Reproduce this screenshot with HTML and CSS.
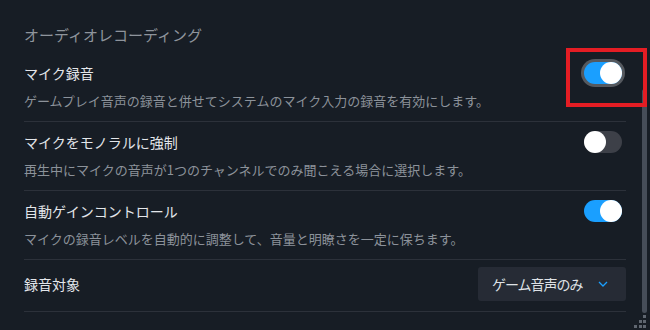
FILE: index.html
```html
<!DOCTYPE html>
<html lang="ja">
<head>
<meta charset="utf-8">
<title>オーディオレコーディング</title>
<link rel="stylesheet" href="styles.css">
</head>
<body>
<div class="window">
  <main class="content">
    <h2 class="section-title">オーディオレコーディング</h2>

    <div class="row">
      <div class="row-head">
        <span class="label">マイク録音</span>
        <span class="toggle on focused highlighted"><span class="knob"></span></span>
      </div>
      <p class="desc">ゲームプレイ音声の録音と併せてシステムのマイク入力の録音を有効にします。</p>
    </div>

    <div class="row">
      <div class="row-head">
        <span class="label">マイクをモノラルに強制</span>
        <span class="toggle off"><span class="knob"></span></span>
      </div>
      <p class="desc">再生中にマイクの音声が1つのチャンネルでのみ聞こえる場合に選択します。</p>
    </div>

    <div class="row">
      <div class="row-head">
        <span class="label">自動ゲインコントロール</span>
        <span class="toggle on"><span class="knob"></span></span>
      </div>
      <p class="desc">マイクの録音レベルを自動的に調整して、音量と明瞭さを一定に保ちます。</p>
    </div>

    <div class="row row-select">
      <span class="label">録音対象</span>
      <div class="select">
        <span class="select-text">ゲーム音声のみ</span>
        <svg class="chevron" width="10" height="6" viewBox="0 0 10 6"><path d="M1 1 L5 5 L9 1" fill="none" stroke="#1a9fff" stroke-width="1.3"/></svg>
      </div>
    </div>
  </main>
  <div class="scrollbar"><div class="thumb"></div></div>
  <div class="grip">
    <span class="dot d1"></span><span class="dot d2"></span><span class="dot d3"></span>
    <span class="dot d4"></span><span class="dot d5"></span><span class="dot d6"></span>
  </div>
</div>
</body>
</html>
```

FILE: styles.css
```css
* { box-sizing: border-box; }
html, body {
  margin: 0;
  padding: 0;
  background: #171d25;
}
body {
  width: 650px;
  height: 330px;
  overflow: hidden;
  font-family: "Noto Sans CJK JP", "Noto Sans", sans-serif;
}
.window {
  position: relative;
  display: flex;
  width: 650px;
  height: 330px;
}
.content {
  width: 602px;
  margin-left: 24px;
  padding-top: 25px;
}
.section-title {
  margin: 0 0 8px 0;
  font-size: 15px;
  line-height: 20px;
  font-weight: 400;
  color: #8e949c;
}
.row {
  padding: 9px 0 11px 0;
  border-bottom: 1px solid #2c313a;
}
.row-head {
  display: flex;
  align-items: center;
  justify-content: space-between;
  height: 22px;
}
.label {
  font-size: 14px;
  line-height: 22px;
  color: #e3e6ea;
}
.desc {
  margin: 8px 0 0 0;
  font-size: 13px;
  line-height: 18px;
  color: #8c929a;
}
.toggle {
  position: relative;
  display: flex;
  width: 38px;
  height: 22px;
  margin-right: 4px;
  border-radius: 11px;
}
.toggle.on { background: #1a9fff; justify-content: flex-end; }
.toggle.off { background: #3d4048; justify-content: flex-start; }
.toggle.focused { box-shadow: 0 0 0 3px #55595f; }
.knob {
  width: 22px;
  height: 22px;
  border-radius: 50%;
  background: #ffffff;
}
.toggle.highlighted::after {
  content: "";
  position: absolute;
  left: -18px;
  top: -14px;
  width: 73px;
  height: 51px;
  border: 4px solid #e41d24;
}
.row-select {
  display: flex;
  align-items: center;
  justify-content: space-between;
  padding: 7px 0 10px 0;
}
.select {
  display: flex;
  align-items: center;
  width: 148px;
  height: 34px;
  padding: 0 18px 0 14px;
  background: #262b35;
  border-radius: 3px;
}
.select-text {
  font-size: 14px;
  line-height: 20px;
  letter-spacing: -1px;
  color: #dfe2e6;
}
.chevron {
  margin-left: auto;
  display: block;
}
.scrollbar {
  width: 5px;
  margin-left: 16px;
}
.thumb {
  width: 5px;
  height: 224px;
  margin-top: 89px;
  border-radius: 3px;
  background: #464d58;
}
.grip {
  position: absolute;
  right: 0;
  bottom: 0;
  width: 20px;
  height: 16px;
}
.dot {
  position: absolute;
  width: 3px;
  height: 3px;
  background: #5f6670;
}
.d1 { left: 13px; top: 1px; }
.d2 { left: 9px; top: 6px; }
.d3 { left: 13px; top: 6px; }
.d4 { left: 4px; top: 11px; }
.d5 { left: 9px; top: 11px; }
.d6 { left: 13px; top: 11px; }
```
